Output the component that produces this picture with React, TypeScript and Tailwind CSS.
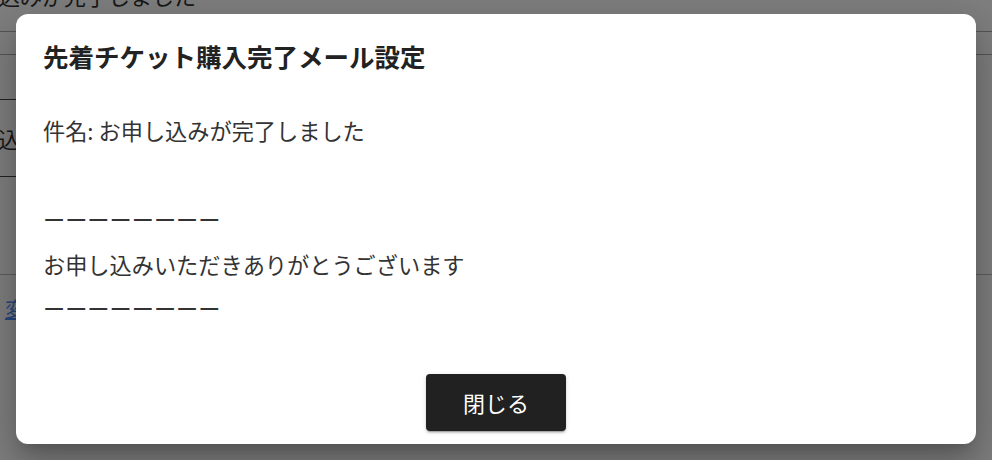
const FONT = "font-['Noto_Sans_CJK_JP','Noto_Sans',sans-serif]";

const BODY_LINES = [
  "件名: お申し込みが完了しました",
  "",
  "ーーーーーーーー",
  "お申し込みいただきありがとうございます",
  "ーーーーーーーー",
];

export default function App() {
  return (
    <div className={`relative h-[460px] w-[992px] overflow-hidden bg-white text-[#222] ${FONT}`}>
      {/* Page behind the dialog */}
      <div className="flex flex-col">
        <div className="h-[32px] border-b border-[#aaa]">
          <p className="-ml-[68px] -mt-[16px] text-[22px] leading-[22px] text-[#333]">
            お申し込みが完了しました
          </p>
        </div>
        <div className="h-[23px] border-b border-[#aaa]" />
        <div className="h-[44px]" />
        <div className="flex h-[78px] w-[700px] items-center border-y border-[#444]">
          <p className="-ml-[68px] text-[22px] leading-[22px] text-[#333]">お申し込み</p>
        </div>
        <div className="h-[98px] border-b border-[#bbb]" />
        <div className="pt-[22px] pl-[5px]">
          <span className="text-[20px] leading-[24px] text-[#4f8ffe] underline">変更</span>
        </div>
      </div>

      {/* Backdrop */}
      <div className="absolute inset-0 bg-black/50" />

      {/* Dialog */}
      <div className="absolute inset-0 flex items-start justify-center pt-[14px]">
        <div className="flex h-[430px] w-[960px] flex-col rounded-[12px] bg-white px-[27px] pt-[27px] pb-[13px] shadow-[0px_11px_15px_-7px_rgba(0,0,0,0.2),0px_24px_38px_3px_rgba(0,0,0,0.14),0px_9px_46px_8px_rgba(0,0,0,0.12)]">
          <h2 className="text-[25.5px] font-bold leading-[30px] text-[#222]">
            先着チケット購入完了メール設定
          </h2>
          <div className="mt-[37px] text-[22.2px] leading-[44.5px] text-[#333]">
            {BODY_LINES.map((line, i) => (
              <p key={i} className="h-[44.5px]">
                {line}
              </p>
            ))}
          </div>
          <div className="mt-auto flex justify-center">
            <button className="h-[57px] w-[140px] rounded-[4px] bg-[#212121] text-[22px] text-white shadow-[0px_3px_1px_-2px_rgba(0,0,0,0.2),0px_2px_2px_0px_rgba(0,0,0,0.14),0px_1px_5px_0px_rgba(0,0,0,0.12)]">
              閉じる
            </button>
          </div>
        </div>
      </div>
    </div>
  );
}
